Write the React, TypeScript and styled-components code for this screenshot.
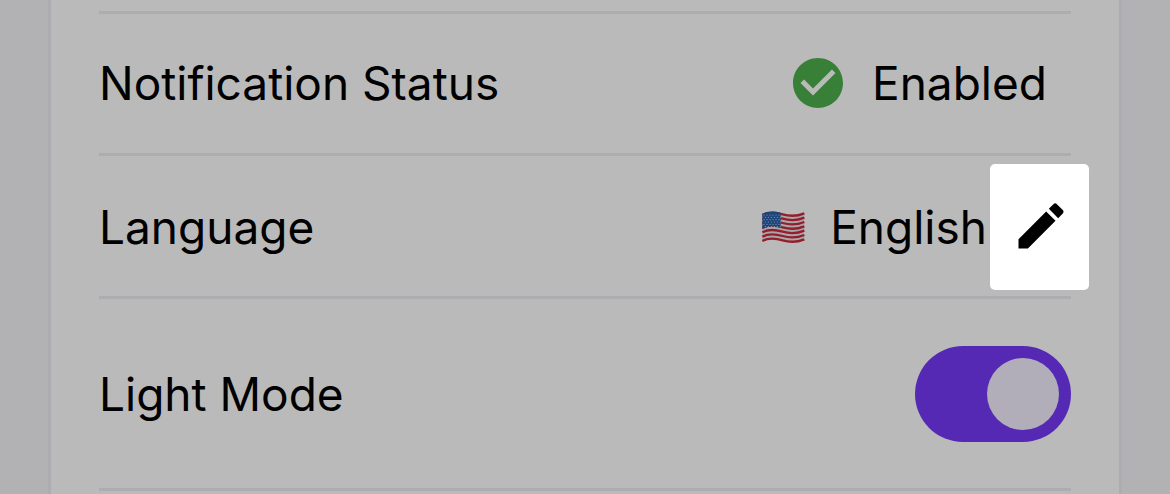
import React, { useState } from "react";
import styled, { createGlobalStyle } from "styled-components";

const colors = {
  page: "#b2b2b5",
  card: "#bababa",
  line: "#acacb1",
  text: "#000000",
  success: "#388038",
  accent: "#5629b5",
  thumb: "#b1aeba",
};

const GlobalStyle = createGlobalStyle`
  *, *::before, *::after { box-sizing: border-box; }
  body {
    margin: 0;
    background: ${colors.page};
    color: ${colors.text};
    font-family: Inter, "Liberation Sans", sans-serif;
    font-size: 46px;
    line-height: 56px;
  }
`;

const Page = styled.main`
  padding: 0 48px;
  min-height: 100vh;
  display: flex;
  flex-direction: column;
`;

const Card = styled.section`
  flex: 1;
  padding: 11px 48px 0;
  background: ${colors.card};
  border: solid ${colors.line};
  border-width: 0 3px;
`;

const List = styled.div`
  border-top: 3px solid ${colors.line};
`;

const rowPadding = {
  text: "39px 0 40px",
  control: "8px 0 6px",
  toggle: "47px 0 46px",
};

const Row = styled.div<{ $kind: keyof typeof rowPadding }>`
  display: flex;
  align-items: center;
  justify-content: space-between;
  padding: ${({ $kind }) => rowPadding[$kind]};
  border-bottom: 3px solid ${colors.line};
`;

const Label = styled.span`
  white-space: nowrap;
`;

const Value = styled.div<{ $inset?: boolean }>`
  display: flex;
  align-items: center;
  gap: 24px;
  padding-right: ${({ $inset }) => ($inset ? 24 : 0)}px;
`;

const EditButton = styled.button`
  display: grid;
  place-items: center;
  width: 99px;
  height: 126px;
  margin-left: -21px;
  margin-right: -18px;
  padding: 0 0 2px 2px;
  border: 0;
  border-radius: 5px;
  background: #ffffff;
  color: #000000;
  cursor: pointer;
`;

const Icon = styled.svg`
  display: block;
  width: 60px;
  height: 60px;
  fill: currentColor;
`;

const StatusIcon = styled(Icon)`
  color: ${colors.success};
`;

const FlagIcon = styled.svg`
  display: block;
  width: 44px;
  height: 34px;
`;

const Switch = styled.input`
  appearance: none;
  display: flex;
  align-items: center;
  width: 156px;
  height: 96px;
  margin: 0;
  padding: 12px;
  border-radius: 48px;
  background: ${colors.line};
  cursor: pointer;

  &::before {
    content: "";
    width: 72px;
    height: 72px;
    border-radius: 50%;
    background: ${colors.thumb};
  }

  &:checked {
    justify-content: flex-end;
    background: ${colors.accent};
  }
`;

const wave = (y: number) =>
  `M1 ${y + 5} C 18 ${y - 4}, 38 ${y - 4}, 62 ${y + 3} S 110 ${y + 7}, 127 ${y}`;

function Flag() {
  const stripes = Array.from({ length: 7 }, (_, i) => 7 + i * 13);
  const stars: [number, number][] = [];
  for (let r = 0; r < 6; r++) {
    for (let c = 0; c < 6; c++) stars.push([6 + c * 9 + (r % 2) * 4, 12 + r * 7]);
  }
  return (
    <FlagIcon viewBox="0 -3 132 102" role="img" aria-label="United States">
      <path
        d="M1 9 C 18 0, 38 0, 62 7 S 110 11, 127 4 V 85 C 110 92, 86 88, 62 88 S 18 81, 1 90 Z"
        fill="#aaa6a8"
      />
      {stripes.map((y) => (
        <path key={y} d={wave(y)} fill="none" stroke="#931f2e" strokeWidth="7" />
      ))}
      <path d="M1 9 C 18 0, 36 0, 56 5 V 50 C 36 45, 18 45, 1 54 Z" fill="#1c4478" />
      {stars.map(([x, y]) => (
        <circle key={`${x}-${y}`} cx={x} cy={y} r="1.8" fill="#8f9eb2" />
      ))}
    </FlagIcon>
  );
}

export default function App() {
  const [light, setLight] = useState(true);
  return (
    <>
      <GlobalStyle />
      <Page>
        <Card>
          <List>
            <Row $kind="text">
              <Label>Notification Status</Label>
              <Value $inset>
                <StatusIcon viewBox="0 0 24 24" aria-hidden="true">
                  <path d="M12 2C6.48 2 2 6.48 2 12s4.48 10 10 10 10-4.48 10-10S17.52 2 12 2m-2 15-5-5 1.41-1.41L10 14.17l7.59-7.59L19 8z" />
                </StatusIcon>
                <span>Enabled</span>
              </Value>
            </Row>
            <Row $kind="control">
              <Label>Language</Label>
              <Value>
                <Flag />
                <span>English</span>
                <EditButton type="button" aria-label="Edit language">
                  <Icon viewBox="0 0 24 24" aria-hidden="true">
                    <path d="M3 17.25V21h3.75L17.81 9.94l-3.75-3.75zM20.71 7.04c.39-.39.39-1.02 0-1.41l-2.34-2.34a.996.996 0 0 0-1.41 0l-1.83 1.83 3.75 3.75z" />
                  </Icon>
                </EditButton>
              </Value>
            </Row>
            <Row $kind="toggle">
              <Label as="label" htmlFor="light-mode">
                Light Mode
              </Label>
              <Switch
                id="light-mode"
                type="checkbox"
                role="switch"
                checked={light}
                onChange={(e) => setLight(e.target.checked)}
              />
            </Row>
          </List>
        </Card>
      </Page>
    </>
  );
}
